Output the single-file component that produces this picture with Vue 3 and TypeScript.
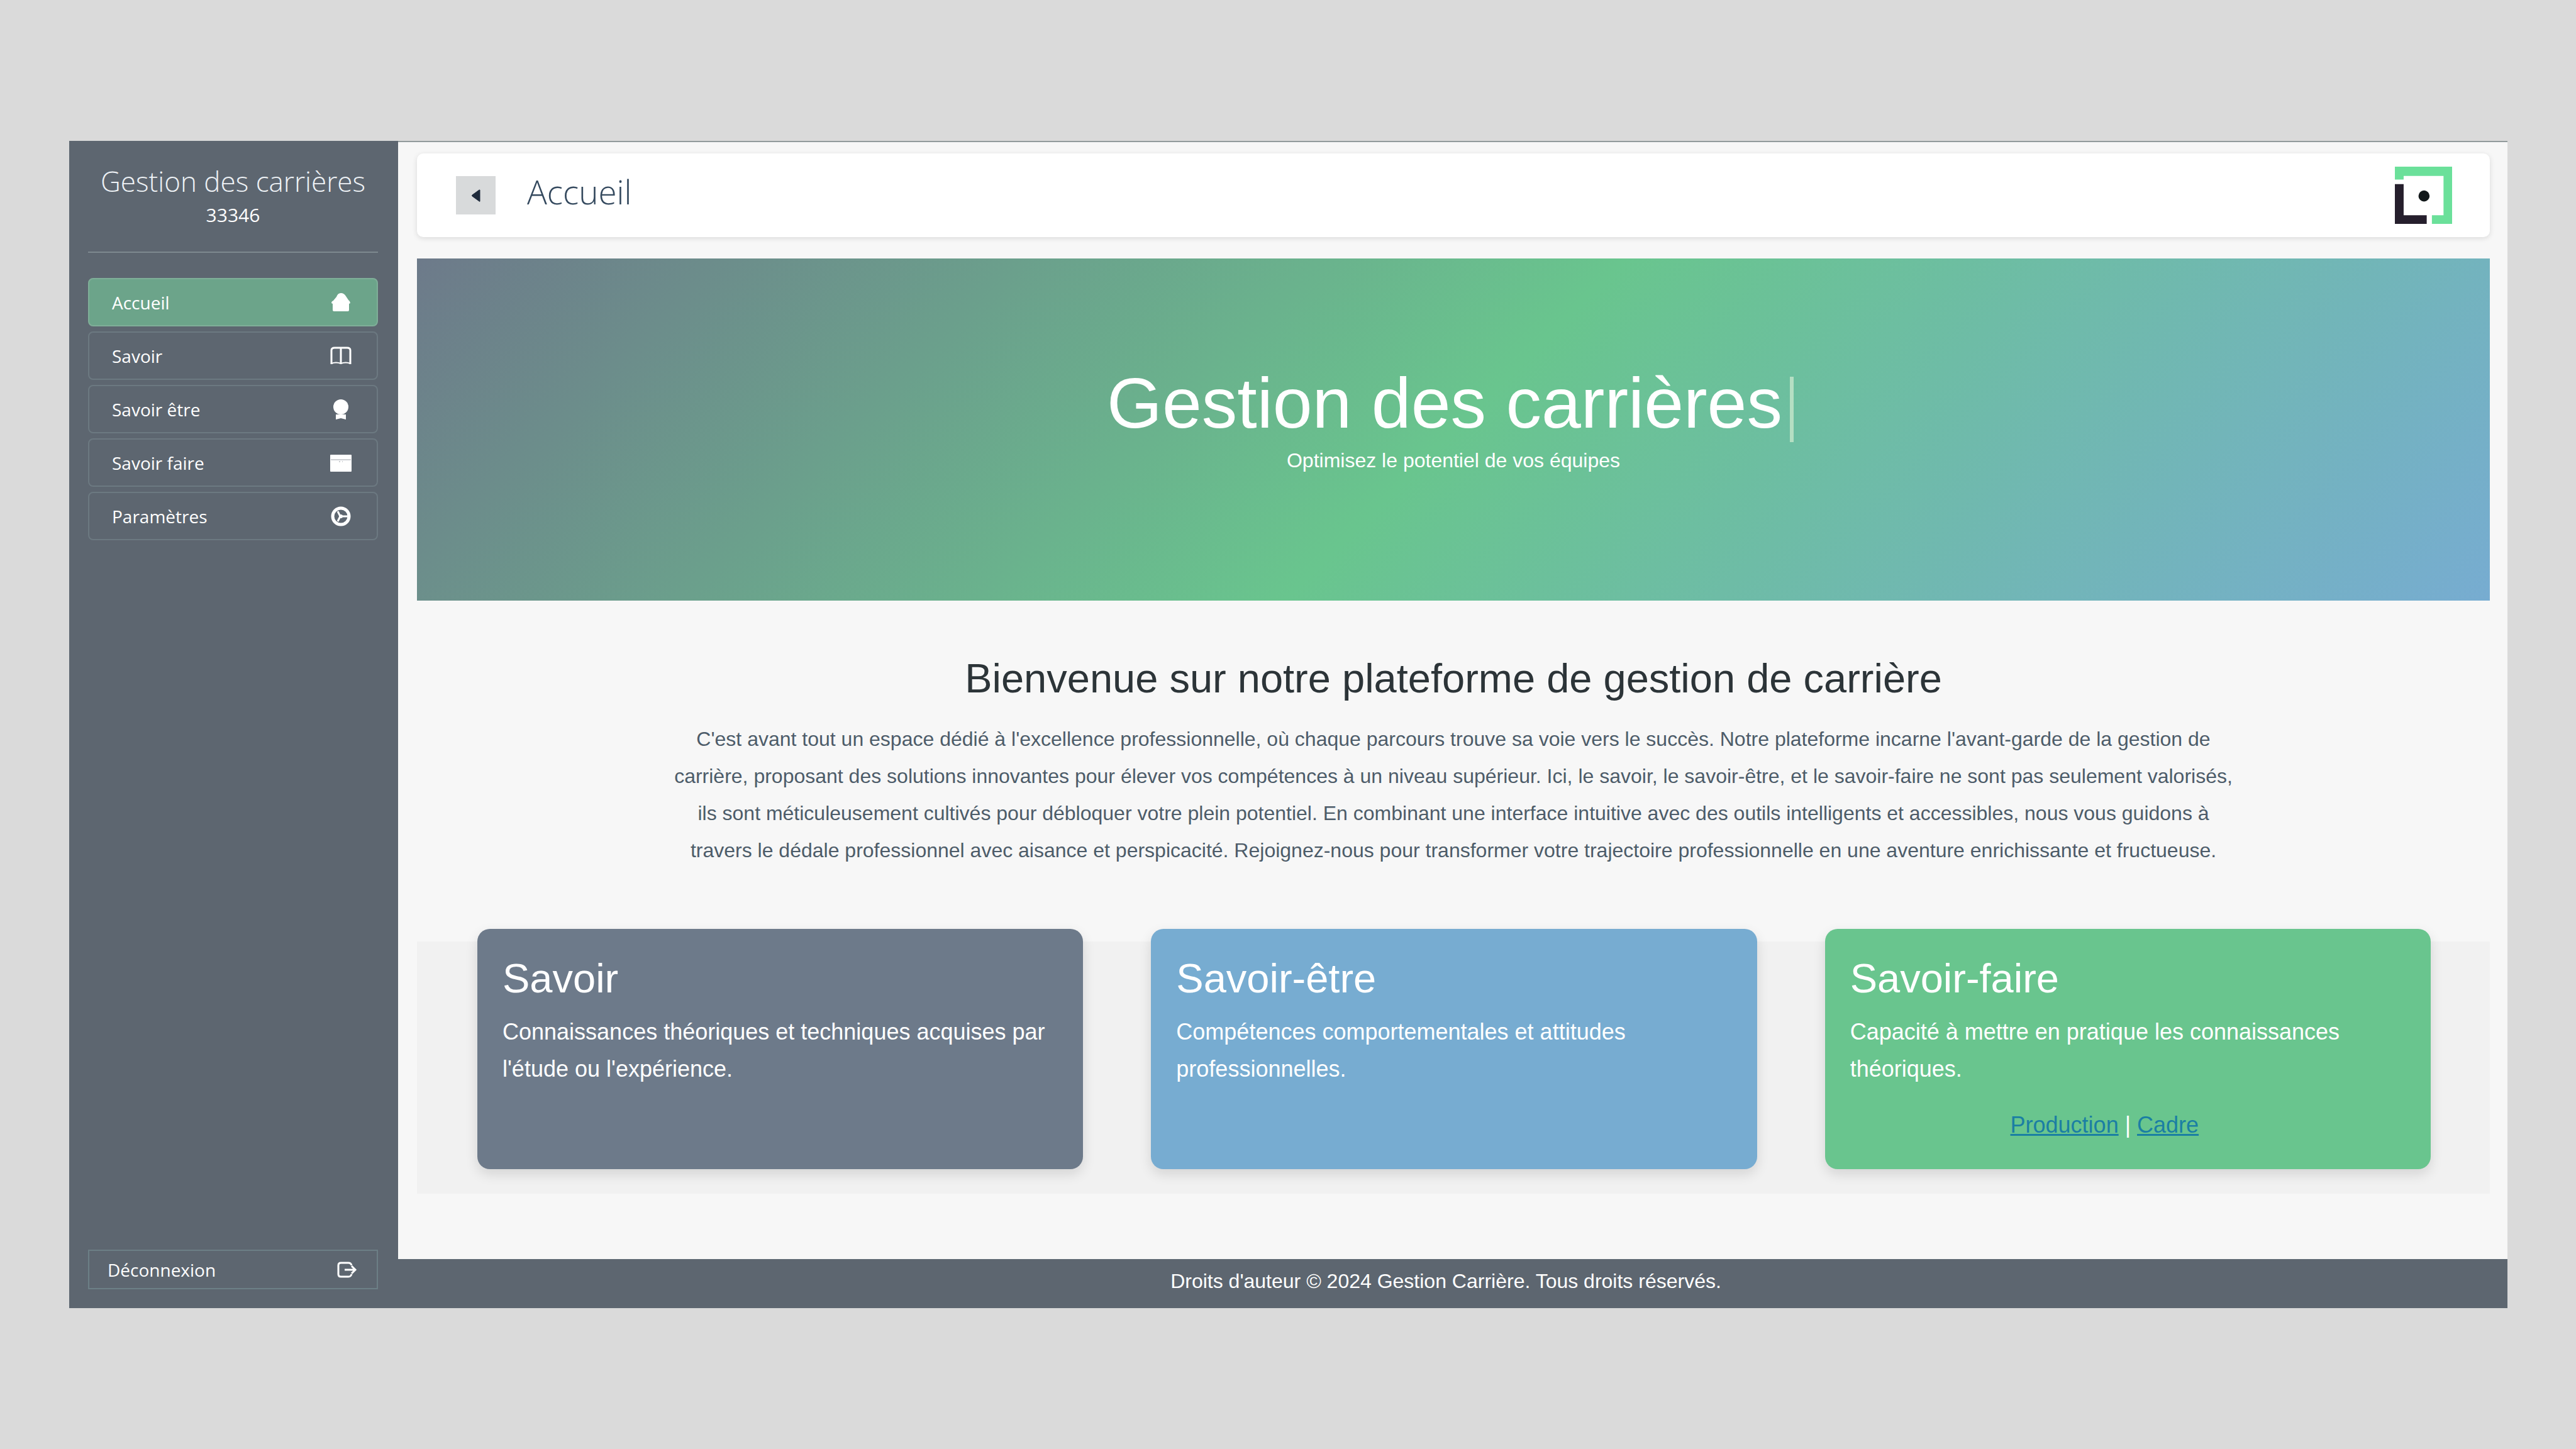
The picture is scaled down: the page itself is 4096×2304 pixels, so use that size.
<script setup lang="ts">
import { ref } from 'vue'

type IconName = 'home' | 'book' | 'award' | 'case' | 'wheel'

interface NavItem {
  label: string
  icon: IconName
}

interface Skill {
  title: string
  text: string
  tone: string
  links: string[]
}

const navItems: NavItem[] = [
  { label: 'Accueil', icon: 'home' },
  { label: 'Savoir', icon: 'book' },
  { label: 'Savoir être', icon: 'award' },
  { label: 'Savoir faire', icon: 'case' },
  { label: 'Paramètres', icon: 'wheel' },
]

const active = ref('Accueil')

const skills: Skill[] = [
  {
    title: 'Savoir',
    text: "Connaissances théoriques et techniques acquises par l'étude ou l'expérience.",
    tone: 'slate',
    links: [],
  },
  {
    title: 'Savoir-être',
    text: 'Compétences comportementales et attitudes professionnelles.',
    tone: 'blue',
    links: [],
  },
  {
    title: 'Savoir-faire',
    text: 'Capacité à mettre en pratique les connaissances théoriques.',
    tone: 'green',
    links: ['Production', 'Cadre'],
  },
]
</script>

<template>
  <div class="page">
    <div class="shell">
      <aside class="sidebar">
        <div class="brand">
          <p class="brand-name">Gestion des carrières</p>
          <p class="brand-id">33346</p>
        </div>
        <nav class="nav" aria-label="Navigation principale">
          <a
            v-for="item in navItems"
            :key="item.label"
            href="#"
            class="nav-link"
            :class="{ active: item.label === active }"
            @click.prevent="active = item.label"
          >
            <span>{{ item.label }}</span>
            <svg class="icon" viewBox="0 0 34 34" aria-hidden="true">
              <path
                v-if="item.icon === 'home'"
                d="M17 2 Q22 2 25 7 L29 13 Q32 15 32 18 L30 19 V29 Q30 31 28 31 H6 Q4 31 4 29 V19 L2 18 Q2 15 5 14 L10 8 Q12 2 17 2Z"
                fill="currentColor"
              />
              <g v-else-if="item.icon === 'book'" fill="none" stroke="currentColor" stroke-width="3">
                <path d="M2 30 V8 Q2 4 7 4 H27 Q32 4 32 8 V30" />
                <path d="M17 4 V29" />
                <path d="M2 29 Q9 26 17 29 Q25 26 32 29" stroke-width="2" />
              </g>
              <g v-else-if="item.icon === 'award'" fill="currentColor">
                <circle cx="17" cy="13" r="12" />
                <path d="M9 25 H25 V33 L17 31 L9 33Z" />
              </g>
              <g v-else-if="item.icon === 'case'">
                <rect x="0" y="4" width="34" height="27" rx="1" fill="currentColor" />
                <path d="M1 12 H33 M14 15 H16 M19 15 H20" stroke="#9ba0a7" stroke-width="1" />
              </g>
              <g v-else fill="none" stroke="currentColor">
                <circle cx="17" cy="17" r="13" stroke-width="5" />
                <path d="M12 9 L16 17 L12 25 M16 17 H28" stroke-width="3" />
                <circle cx="17" cy="17" r="3" fill="currentColor" stroke="none" />
              </g>
            </svg>
          </a>
        </nav>
        <button type="button" class="logout">
          <span>Déconnexion</span>
          <svg class="icon-out" viewBox="0 0 32 26" aria-hidden="true">
            <path
              d="M23 6 Q22 2 18 2 H6 Q2 2 2 6 V20 Q2 24 6 24 H18 Q22 24 23 20"
              fill="none"
              stroke="currentColor"
              stroke-width="3"
            />
            <path d="M12 13 H28 M23 7 L29 13 L23 19" fill="none" stroke="currentColor" stroke-width="3" />
          </svg>
        </button>
      </aside>

      <div class="main">
        <div class="content">
          <header class="topbar">
            <button type="button" class="toggle" aria-label="Réduire le menu">
              <svg viewBox="0 0 14 20" class="caret" aria-hidden="true">
                <path d="M13 1 V19 Q13 20 12 19 L1 11 Q0 10 1 9 L12 1Z" fill="#1f2b3c" stroke="#1f2b3c" />
              </svg>
            </button>
            <h1 class="page-title">Accueil</h1>
            <svg class="logo" viewBox="0 0 320 320" role="img" aria-label="Logo">
              <path d="M0 0 H320 V320 H207 V272 H272 V52 H49 V72 H0Z" fill="#6be09a" />
              <path d="M0 98 H49 V272 H178 V320 H0Z" fill="#261f2d" />
              <circle cx="163" cy="164" r="31" fill="#12181a" />
            </svg>
          </header>

          <section class="hero">
            <h2 class="hero-title">
              <span>Gestion des carrières</span><span class="cursor" aria-hidden="true"></span>
            </h2>
            <p class="hero-sub">Optimisez le potentiel de vos équipes</p>
          </section>

          <section class="welcome">
            <h2>Bienvenue sur notre plateforme de gestion de carrière</h2>
            <p>
              C'est avant tout un espace dédié à l'excellence professionnelle, où chaque parcours trouve sa voie
              vers le succès. Notre plateforme incarne l'avant-garde de la gestion de carrière, proposant des
              solutions innovantes pour élever vos compétences à un niveau supérieur. Ici, le savoir, le
              savoir-être, et le savoir-faire ne sont pas seulement valorisés, ils sont méticuleusement cultivés
              pour débloquer votre plein potentiel. En combinant une interface intuitive avec des outils
              intelligents et accessibles, nous vous guidons à travers le dédale professionnel avec aisance et
              perspicacité. Rejoignez-nous pour transformer votre trajectoire professionnelle en une aventure
              enrichissante et fructueuse.
            </p>
          </section>

          <section class="skills">
            <article v-for="skill in skills" :key="skill.title" class="card" :class="skill.tone">
              <h3>{{ skill.title }}</h3>
              <p>{{ skill.text }}</p>
              <div v-if="skill.links.length" class="card-links">
                <template v-for="(link, i) in skill.links" :key="link">
                  <span v-if="i > 0"> | </span><a href="#">{{ link }}</a>
                </template>
              </div>
            </article>
          </section>
        </div>

        <footer class="footer">Droits d'auteur © 2024 Gestion Carrière. Tous droits réservés.</footer>
      </div>
    </div>
  </div>
</template>

<style>
body {
  margin: 0;
  background: #dadada;
}
</style>

<style scoped>
.page,
.page * {
  box-sizing: border-box;
}

.page {
  display: flex;
  min-height: 100vh;
  padding: 224px 109px 224px 110px;
  background: #dadada;
  font-family: 'Liberation Sans', Arial, sans-serif;
  font-size: 36px;
}

h1,
h2,
h3,
p {
  margin: 0;
  font-weight: 400;
}

.shell {
  display: flex;
  flex: 1;
  background: #f7f7f7;
}

.sidebar {
  display: flex;
  flex-direction: column;
  flex: none;
  width: 523px;
  padding: 34px 32px 30px 30px;
  background: #5d6670;
  color: #fff;
  font-family: 'Open Sans', 'Noto Sans', sans-serif;
  font-size: 28px;
}

.brand {
  padding-bottom: 36px;
  border-bottom: 2px solid #7d898f;
  text-align: center;
}

.brand-name {
  font-size: 44px;
  font-weight: 300;
  line-height: 60px;
  white-space: nowrap;
  color: #eef2f6;
}

.brand-id {
  margin-top: 2px;
  font-size: 30px;
  line-height: 44px;
}

.nav {
  display: flex;
  flex-direction: column;
  gap: 8px;
  margin-top: 40px;
}

.nav-link {
  display: flex;
  align-items: center;
  justify-content: space-between;
  height: 77px;
  padding: 0 40px 0 36px;
  border: 2px solid #6c7981;
  border-radius: 8px;
  color: #fff;
  text-decoration: none;
}

.nav-link.active {
  border-color: #7fae98;
  background: #6ca48a;
}

.icon {
  width: 34px;
  height: 34px;
}

.logout {
  display: flex;
  align-items: center;
  justify-content: space-between;
  height: 63px;
  margin-top: auto;
  padding: 0 31px 0 29px;
  border: 2px solid #6c7f86;
  background: none;
  color: #fff;
  font: inherit;
}

.icon-out {
  width: 32px;
  height: 26px;
}

.main {
  display: flex;
  flex: 1;
  flex-direction: column;
  min-width: 0;
  border-top: 2px solid #929b9c;
}

.content {
  flex: 1;
  padding: 18px 28px 0 30px;
}

.topbar {
  display: flex;
  align-items: center;
  height: 133px;
  padding: 0 60px 0 62px;
  border-radius: 10px;
  background: #fff;
  box-shadow: 0 2px 8px rgba(0, 0, 0, 0.12);
}

.toggle {
  display: flex;
  align-items: center;
  justify-content: center;
  width: 63px;
  height: 61px;
  padding: 0;
  border: 0;
  background: #d8dadb;
}

.caret {
  width: 14px;
  height: 20px;
}

.page-title {
  margin-left: 50px;
  padding-bottom: 12px;
  color: #34495e;
  font-family: 'Open Sans', 'Noto Sans', sans-serif;
  font-size: 53px;
  font-weight: 300;
  line-height: 72px;
}

.logo {
  width: 91px;
  height: 91px;
  margin-left: auto;
}

.hero {
  height: 544px;
  margin-top: 34px;
  padding-top: 168px;
  background: linear-gradient(135deg, #6d7a8a, #69c58e 50%, #77acd1);
  color: #fff;
  text-align: center;
}

.hero-title {
  display: flex;
  align-items: flex-end;
  justify-content: center;
  padding-right: 10px;
  font-size: 113px;
  line-height: 124px;
  white-space: nowrap;
}

.cursor {
  width: 6px;
  height: 104px;
  margin-left: 12px;
  background: #b5dfc3;
}

.hero-sub {
  font-size: 32px;
  line-height: 58px;
}

.welcome {
  display: flex;
  flex-direction: column;
  align-items: center;
  padding: 85px 0 115px;
  text-align: center;
}

.welcome h2 {
  color: #2c3438;
  font-size: 65px;
  line-height: 78px;
}

.welcome p {
  max-width: 2500px;
  margin-top: 28px;
  color: #4d5c69;
  font-size: 32px;
  line-height: 59px;
}

.skills {
  display: grid;
  grid-template-columns: repeat(3, 1fr);
  gap: 108px;
  padding: 0 94px 39px 96px;
  background: #f1f1f1;
}

.card {
  min-height: 382px;
  margin-top: -20px;
  padding: 40px;
  border-radius: 20px;
  box-shadow: 0 8px 20px rgba(0, 0, 0, 0.12);
  color: #fff;
  line-height: 59px;
}

.card h3 {
  margin-bottom: 16px;
  font-size: 65px;
  line-height: 78px;
}

.slate {
  background: #6d7a8a;
}

.blue {
  background: #77acd1;
}

.green {
  background: #69c58e;
}

.card-links {
  margin-top: 30px;
  padding-right: 74px;
  text-align: center;
  white-space: pre-wrap;
}

.card-links a {
  color: #1b7fa3;
}

.footer {
  height: 78px;
  padding-right: 22px;
  background: #5d6670;
  color: #fff;
  font-size: 32px;
  line-height: 70px;
  text-align: center;
}
</style>
